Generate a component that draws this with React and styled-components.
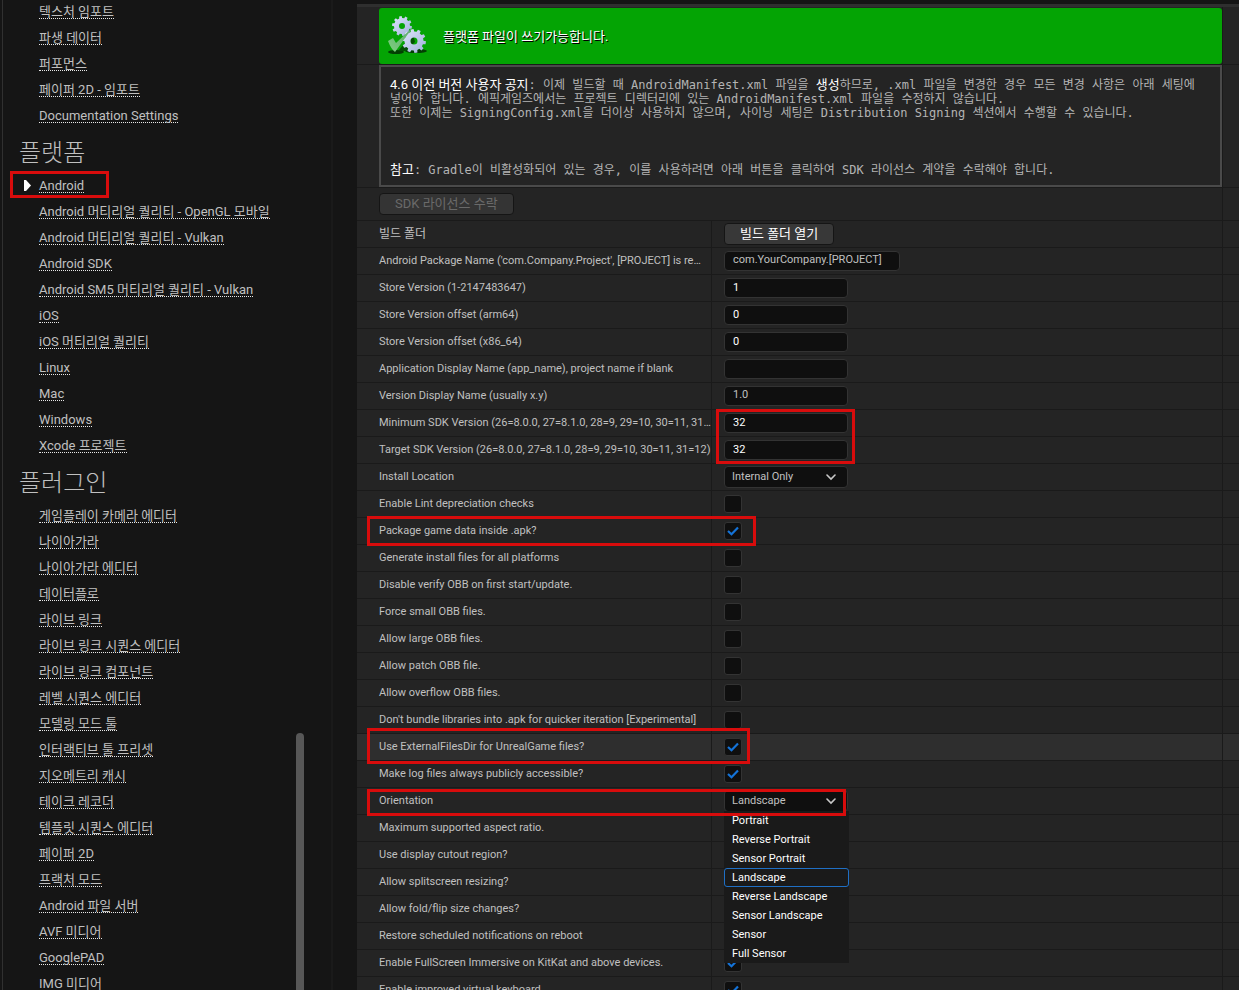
import { useState } from 'react';
import styled, { createGlobalStyle } from 'styled-components';

const GlobalStyle = createGlobalStyle`
  * {
    box-sizing: border-box;
  }

  body {
    margin: 0;
    background: #151515;
    color: #c0c0c0;
    font-family: Roboto, 'Noto Sans CJK KR', sans-serif;
    font-size: 11px;
  }

  button, input, select {
    font-family: inherit;
    font-size: inherit;
    color: inherit;
  }
`;

const Page = styled.div`
  display: flex;
  gap: 24px;
  height: 100vh;
  padding-left: 2px;
  overflow: hidden;
`;

const Sidebar = styled.aside`
  display: flex;
  flex: none;
  width: 331px;
  border-left: 1px solid #303030;
  border-right: 2px solid #1a1a1a;
`;

const Nav = styled.nav`
  flex: 1;
  min-width: 0;
  padding-left: 16px;
`;

const NavHeading = styled.h2`
  height: 44px;
  margin: 0;
  font-size: 24px;
  font-weight: 300;
  line-height: 46px;
  color: #c0c0c0;
`;

const NavList = styled.ul`
  margin: 0;
  padding: 0;
  list-style: none;
`;

const NavItem = styled.li`
  position: relative;
  display: flex;
  align-items: flex-start;
  height: 26px;
  padding: 5px 0 0 20px;
`;

const NavLink = styled.a`
  border-bottom: 1px dotted #e8e8e8;
  font-size: 13px;
  line-height: 13px;
  white-space: nowrap;
  color: #c0c0c0;
  text-decoration: none;
`;

const Arrow = styled.svg`
  position: absolute;
  left: 5px;
  top: 6px;
`;

const ScrollTrack = styled.div`
  display: flex;
  flex: none;
  align-items: flex-end;
  width: 8px;
  margin-right: 27px;
`;

const ScrollThumb = styled.div`
  width: 8px;
  height: 26%;
  border-radius: 4px 4px 0 0;
  background: #575757;
`;

const Panel = styled.main`
  flex: 1;
  min-width: 0;
  margin-top: 4px;
  border-top: 3px solid #2f2f2f;
`;

const WideRow = styled.div`
  display: grid;
  grid-template-columns: 1fr 17px;
  border-bottom: 1px solid #1a1a1a;
  background: #242424;
`;

const WideCell = styled.div`
  min-width: 0;
  padding: ${(props) => props.$pad || '0'} 0 ${(props) => props.$pad || '0'} 22px;
`;

const Gutter = styled.div`
  border-left: 1px solid #1a1a1a;
`;

const Banner = styled.div`
  display: flex;
  align-items: center;
  gap: 14px;
  height: 56px;
  margin-top: 1px;
  padding-left: 8px;
  border-radius: 3px;
  background: #04a404;
  color: #fff;
  font-size: 13px;
  text-shadow: 1px 1px 0 #000;
`;

const BannerText = styled.span`
  padding-bottom: 2px;
`;

const Notice = styled.div`
  padding: 11px 9px 8px;
  border: 2px solid #4a4a4a;
  font-family: 'DejaVu Sans Mono', 'Noto Sans CJK KR', monospace;
  font-size: 12px;
  line-height: 14px;
  color: #b4b4b4;

  p {
    margin: 0;
  }

  p + p {
    margin-top: 43px;
  }

  strong {
    font-family: Roboto, 'Noto Sans CJK KR', sans-serif;
    font-size: 13px;
    font-weight: 400;
    color: #fff;
  }
`;

const Row = styled.div`
  position: relative;
  display: grid;
  grid-template-columns: 354px 1fr 17px;
  height: 27px;
  border-bottom: 1px solid #1a1a1a;
  background: ${(props) => (props.$hovered ? '#2e2e2e' : '#242424')};
`;

const Name = styled.label`
  padding-left: 22px;
  overflow: hidden;
  white-space: nowrap;
  line-height: 26px;
  font-size: ${(props) => (props.$korean ? '12px' : '11px')};
`;

const Value = styled.div`
  display: flex;
  align-items: center;
  min-width: 0;
  padding-left: 12px;
  border-left: 1px solid #1a1a1a;
`;

const Field = styled.input`
  width: ${(props) => (props.$wide ? '176px' : '124px')};
  height: 20px;
  padding: 0 8px ${(props) => (props.$number ? '2px' : '4px')};
  border: 1px solid #333;
  border-radius: 4px;
  outline: none;
  background: #0f0f0f;
  color: ${(props) => (props.$number ? '#fff' : '#c0c0c0')};
`;

const CheckWrap = styled.span`
  position: relative;
  display: flex;

  svg {
    position: absolute;
    left: 3px;
    top: 4px;
    pointer-events: none;
  }
`;

const CheckInput = styled.input`
  width: 18px;
  height: 18px;
  margin: 0;
  appearance: none;
  border: 1px solid #333;
  border-radius: 3px;
  background: #0f0f0f;
`;

const SelectWrap = styled.span`
  position: relative;
  display: flex;
  width: 124px;

  svg {
    position: absolute;
    right: 12px;
    top: 8px;
    pointer-events: none;
  }
`;

const SelectBox = styled.select`
  width: 100%;
  height: 22px;
  padding: 0 24px 2px 7px;
  appearance: none;
  border: 1px solid #333;
  border-radius: 4px;
  outline: none;
  background: #0f0f0f;
  color: #c0c0c0;
`;

const Menu = styled.ul`
  position: absolute;
  z-index: 2;
  left: 0;
  top: 21px;
  width: 125px;
  margin: 0;
  padding: 0;
  list-style: none;
  background: #1a1a1a;
`;

const MenuItem = styled.button`
  display: block;
  width: 100%;
  height: 19px;
  padding: 0 7px;
  border: 1px solid ${(props) => (props.$selected ? '#1f6fc4' : 'transparent')};
  border-radius: 3px;
  background: none;
  text-align: left;
  line-height: 16px;
  color: #fff;
`;

const Button = styled.button`
  height: 22px;
  padding: 0 15px 1px;
  border: 1px solid #151515;
  border-radius: 4px;
  background: #383838;
  font-size: 13px;
  line-height: 18px;
  color: #fff;

  &:disabled {
    background: #343434;
    color: #6a6a6a;
  }
`;

// red frame around something that the reader should look at
const Marker = styled.span`
  position: absolute;
  z-index: 3;
  left: ${(props) => props.$left}px;
  top: ${(props) => props.$top}px;
  width: ${(props) => props.$width}px;
  height: ${(props) => props.$height}px;
  border: 3px solid #d80c0c;
  pointer-events: none;
`;

const navGroups = [
  {
    items: ['텍스처 임포트', '파생 데이터', '퍼포먼스', '페이퍼 2D - 임포트', 'Documentation Settings'],
  },
  {
    title: '플랫폼',
    items: [
      'Android',
      'Android 머티리얼 퀄리티 - OpenGL 모바일',
      'Android 머티리얼 퀄리티 - Vulkan',
      'Android SDK',
      'Android SM5 머티리얼 퀄리티 - Vulkan',
      'iOS',
      'iOS 머티리얼 퀄리티',
      'Linux',
      'Mac',
      'Windows',
      'Xcode 프로젝트',
    ],
  },
  {
    title: '플러그인',
    items: [
      '게임플레이 카메라 에디터',
      '나이아가라',
      '나이아가라 에디터',
      '데이터플로',
      '라이브 링크',
      '라이브 링크 시퀀스 에디터',
      '라이브 링크 컴포넌트',
      '레벨 시퀀스 에디터',
      '모델링 모드 툴',
      '인터랙티브 툴 프리셋',
      '지오메트리 캐시',
      '테이크 레코더',
      '템플릿 시퀀스 에디터',
      '페이퍼 2D',
      '프랙처 모드',
      'Android 파일 서버',
      'AVF 미디어',
      'GooglePAD',
      'IMG 미디어',
    ],
  },
];

const orientations = [
  'Portrait',
  'Reverse Portrait',
  'Sensor Portrait',
  'Landscape',
  'Reverse Landscape',
  'Sensor Landscape',
  'Sensor',
  'Full Sensor',
];

const settings = [
  { id: 'package', label: "Android Package Name ('com.Company.Project', [PROJECT] is re…", type: 'text', value: 'com.YourCompany.[PROJECT]', wide: true },
  { id: 'store', label: 'Store Version (1-2147483647)', type: 'number', value: '1' },
  { id: 'arm64', label: 'Store Version offset (arm64)', type: 'number', value: '0' },
  { id: 'x86', label: 'Store Version offset (x86_64)', type: 'number', value: '0' },
  { id: 'appName', label: 'Application Display Name (app_name), project name if blank', type: 'text', value: '' },
  { id: 'versionName', label: 'Version Display Name (usually x.y)', type: 'text', value: '1.0' },
  { id: 'minSdk', label: 'Minimum SDK Version (26=8.0.0, 27=8.1.0, 28=9, 29=10, 30=11, 31…', type: 'number', value: '32', marker: [359, -1, 139, 55] },
  { id: 'targetSdk', label: 'Target SDK Version (26=8.0.0, 27=8.1.0, 28=9, 29=10, 30=11, 31=12)', type: 'number', value: '32' },
  { id: 'install', label: 'Install Location', type: 'select', value: 'Internal Only', options: ['Internal Only'] },
  { id: 'lint', label: 'Enable Lint depreciation checks', type: 'check' },
  { id: 'dataInApk', label: 'Package game data inside .apk?', type: 'check', value: true, marker: [10, -2, 389, 30] },
  { id: 'allPlatforms', label: 'Generate install files for all platforms', type: 'check' },
  { id: 'verifyObb', label: 'Disable verify OBB on first start/update.', type: 'check' },
  { id: 'smallObb', label: 'Force small OBB files.', type: 'check' },
  { id: 'largeObb', label: 'Allow large OBB files.', type: 'check' },
  { id: 'patchObb', label: 'Allow patch OBB file.', type: 'check' },
  { id: 'overflowObb', label: 'Allow overflow OBB files.', type: 'check' },
  { id: 'bundleLibs', label: "Don't bundle libraries into .apk for quicker iteration [Experimental]", type: 'check' },
  { id: 'externalDir', label: 'Use ExternalFilesDir for UnrealGame files?', type: 'check', value: true, hovered: true, marker: [10, -6, 383, 36] },
  { id: 'publicLogs', label: 'Make log files always publicly accessible?', type: 'check', value: true },
  { id: 'orientation', label: 'Orientation', type: 'select', value: 'Landscape', options: orientations, open: true, marker: [10, 1, 479, 27] },
  { id: 'aspect', label: 'Maximum supported aspect ratio.', type: 'number', value: '' },
  { id: 'cutout', label: 'Use display cutout region?', type: 'check' },
  { id: 'splitscreen', label: 'Allow splitscreen resizing?', type: 'check' },
  { id: 'fold', label: 'Allow fold/flip size changes?', type: 'check' },
  { id: 'notifications', label: 'Restore scheduled notifications on reboot', type: 'check' },
  { id: 'immersive', label: 'Enable FullScreen Immersive on KitKat and above devices.', type: 'check', value: true },
  { id: 'keyboard', label: 'Enable improved virtual keyboard', type: 'check', value: true },
];

function gearPath(cx, cy, outer, inner, hole, teeth) {
  const step = (Math.PI * 2) / teeth;
  const point = (radius, angle) =>
    `${(cx + radius * Math.cos(angle)).toFixed(2)} ${(cy + radius * Math.sin(angle)).toFixed(2)}`;
  const parts = [];
  for (let i = 0; i < teeth; i += 1) {
    const a = i * step + 0.15;
    parts.push(point(inner, a - step * 0.3));
    parts.push(point(outer, a - step * 0.2));
    parts.push(point(outer, a + step * 0.2));
    parts.push(point(inner, a + step * 0.3));
  }
  return `M${parts.join('L')}Z M${cx - hole} ${cy}a${hole} ${hole} 0 1 0 ${hole * 2} 0a${hole} ${hole} 0 1 0 ${-hole * 2} 0Z`;
}

function GearsIcon() {
  return (
    <svg width="42" height="44" viewBox="0 0 42 44" aria-hidden="true">
      <defs>
        <linearGradient id="gear" x1="0" y1="0" x2="1" y2="1">
          <stop offset="0" stopColor="#dfe6fb" />
          <stop offset="1" stopColor="#9fb0dc" />
        </linearGradient>
        <linearGradient id="tick" x1="1" y1="0" x2="0" y2="1">
          <stop offset="0" stopColor="#5aa56c" />
          <stop offset="1" stopColor="#7fd07f" />
        </linearGradient>
      </defs>
      <ellipse cx="9" cy="38" rx="8" ry="2" fill="#033f03" />
      <ellipse cx="29" cy="37" rx="11" ry="2" fill="#033f03" />
      <path d="M11 37L26 20l2 8-9 9Z" fill="#045004" />
      <path d={gearPath(15, 12, 10, 8, 3, 10)} fill="url(#gear)" fillRule="evenodd" />
      <path d={gearPath(27, 27, 12, 9.5, 3.5, 10)} fill="url(#gear)" fillRule="evenodd" />
      <path d="M1 27l5-3 3 5L26 13 8 38Q4 35 1 27Z" fill="url(#tick)" />
    </svg>
  );
}

function Chevron() {
  return (
    <svg width="10" height="7" viewBox="0 0 10 7" aria-hidden="true">
      <path d="M1 1l4 4 4-4" fill="none" stroke="#c8c8c8" strokeWidth="1.6" strokeLinecap="round" />
    </svg>
  );
}

function CheckBox({ id, defaultChecked }) {
  const [checked, setChecked] = useState(Boolean(defaultChecked));

  return (
    <CheckWrap>
      <CheckInput
        id={id}
        type="checkbox"
        checked={checked}
        onChange={(event) => setChecked(event.target.checked)}
      />
      {checked && (
        <svg width="12" height="10" viewBox="0 0 12 10" aria-hidden="true">
          <path d="M1 5l3.5 3.2L11 1.5" fill="none" stroke="#1473d8" strokeWidth="2.2" />
        </svg>
      )}
    </CheckWrap>
  );
}

function DropDown({ id, defaultValue, options, defaultOpen }) {
  const [value, setValue] = useState(defaultValue);
  const [open, setOpen] = useState(Boolean(defaultOpen));

  const pick = (option) => {
    setValue(option);
    setOpen(false);
  };

  return (
    <SelectWrap>
      <SelectBox id={id} value={value} onChange={(event) => setValue(event.target.value)}>
        {options.map((option) => (
          <option key={option}>{option}</option>
        ))}
      </SelectBox>
      <Chevron />
      {open && (
        <Menu>
          {options.map((option) => (
            <li key={option}>
              <MenuItem type="button" $selected={option === value} onClick={() => pick(option)}>
                {option}
              </MenuItem>
            </li>
          ))}
        </Menu>
      )}
    </SelectWrap>
  );
}

function Control({ item }) {
  if (item.type === 'check') {
    return <CheckBox id={item.id} defaultChecked={item.value} />;
  }
  if (item.type === 'select') {
    return (
      <DropDown
        id={item.id}
        defaultValue={item.value}
        options={item.options}
        defaultOpen={item.open}
      />
    );
  }
  return (
    <Field
      id={item.id}
      type="text"
      defaultValue={item.value}
      $wide={item.wide}
      $number={item.type === 'number'}
    />
  );
}

function Frame({ box }) {
  const [left, top, width, height] = box;
  return <Marker $left={left} $top={top} $width={width} $height={height} />;
}

function App() {
  return (
    <>
      <GlobalStyle />
      <Page>
        <Sidebar>
          <Nav>
            {navGroups.map((group) => (
              <section key={group.title || 'top'}>
                {group.title && <NavHeading>{group.title}</NavHeading>}
                <NavList>
                  {group.items.map((item) => (
                    <NavItem key={item}>
                      {item === 'Android' && (
                        <>
                          <Arrow width="7" height="11" viewBox="0 0 7 11" aria-hidden="true">
                            <path d="M0 0h2l5 5.5L2 11H0Z" fill="#fff" />
                          </Arrow>
                          <Frame box={[-9, -3, 99, 27]} />
                        </>
                      )}
                      <NavLink href="#">{item}</NavLink>
                    </NavItem>
                  ))}
                </NavList>
              </section>
            ))}
          </Nav>
          <ScrollTrack>
            <ScrollThumb />
          </ScrollTrack>
        </Sidebar>
        <Panel>
          <WideRow>
            <WideCell>
              <Banner>
                <GearsIcon />
                <BannerText>플랫폼 파일이 쓰기가능합니다.</BannerText>
              </Banner>
            </WideCell>
            <Gutter />
          </WideRow>
          <WideRow>
            <WideCell>
              <Notice>
                <p>
                  <strong>4.6 이전 버전 사용자 공지</strong>: 이제 빌드할 때 AndroidManifest.xml 파일을{' '}
                  <strong>생성</strong>하므로, .xml 파일을 변경한 경우 모든 변경 사항은 아래 세팅에
                  <br />
                  넣어야 합니다. 에픽게임즈에서는 프로젝트 디렉터리에 있는 AndroidManifest.xml 파일을 수정하지 않습니다.
                  <br />
                  또한 이제는 SigningConfig.xml을 더이상 사용하지 않으며, 사이닝 세팅은 Distribution Signing 섹션에서 수행할 수 있습니다.
                </p>
                <p>
                  <strong>참고</strong>: Gradle이 비활성화되어 있는 경우, 이를 사용하려면 아래 버튼을 클릭하여 SDK 라이선스 계약을 수락해야 합니다.
                </p>
              </Notice>
            </WideCell>
            <Gutter />
          </WideRow>
          <WideRow>
            <WideCell $pad="5px">
              <Button type="button" disabled>
                SDK 라이선스 수락
              </Button>
            </WideCell>
            <Gutter />
          </WideRow>
          <Row>
            <Name as="span" $korean>
              빌드 폴더
            </Name>
            <Value>
              <Button type="button">빌드 폴더 열기</Button>
            </Value>
            <Gutter />
          </Row>
          {settings.map((item) => (
            <Row key={item.id} $hovered={item.hovered}>
              <Name htmlFor={item.id}>{item.label}</Name>
              <Value>
                <Control item={item} />
              </Value>
              <Gutter />
              {item.marker && <Frame box={item.marker} />}
            </Row>
          ))}
        </Panel>
      </Page>
    </>
  );
}

export default App;
